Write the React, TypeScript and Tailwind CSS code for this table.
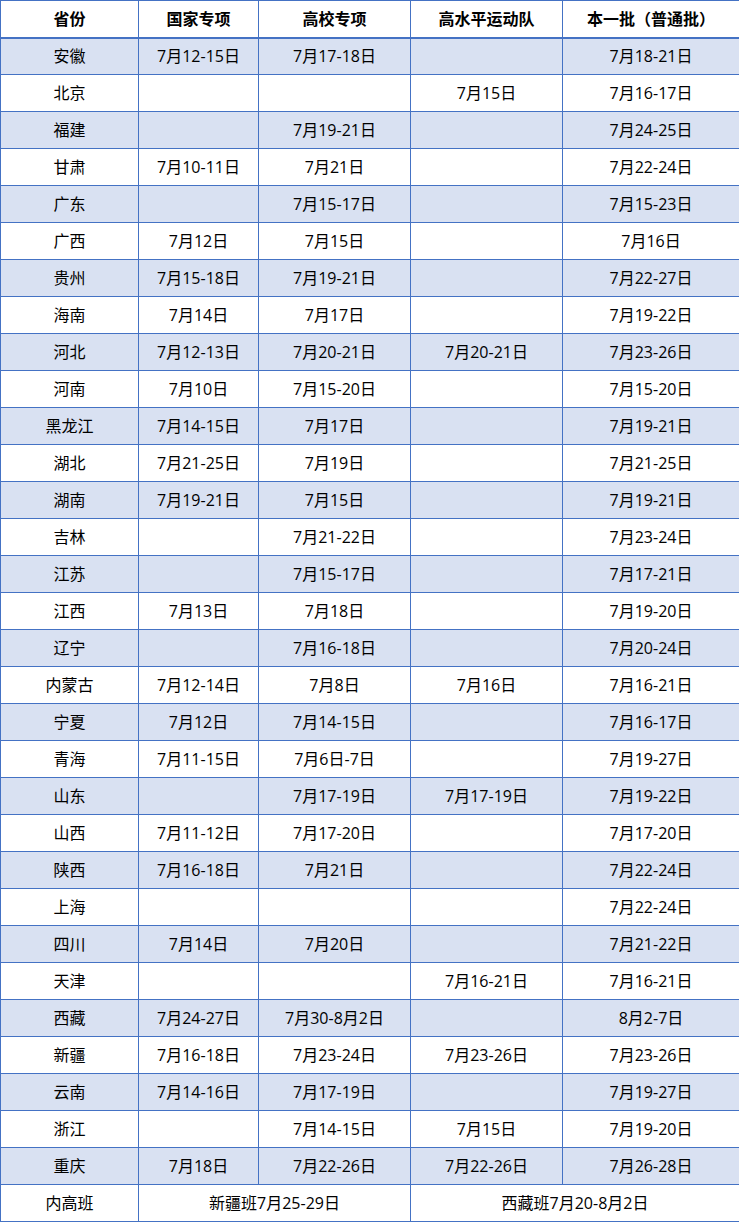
const ROWS: [string, string, string, string, string][] = [
  ["安徽", "7月12-15日", "7月17-18日", "", "7月18-21日"],
  ["北京", "", "", "7月15日", "7月16-17日"],
  ["福建", "", "7月19-21日", "", "7月24-25日"],
  ["甘肃", "7月10-11日", "7月21日", "", "7月22-24日"],
  ["广东", "", "7月15-17日", "", "7月15-23日"],
  ["广西", "7月12日", "7月15日", "", "7月16日"],
  ["贵州", "7月15-18日", "7月19-21日", "", "7月22-27日"],
  ["海南", "7月14日", "7月17日", "", "7月19-22日"],
  ["河北", "7月12-13日", "7月20-21日", "7月20-21日", "7月23-26日"],
  ["河南", "7月10日", "7月15-20日", "", "7月15-20日"],
  ["黑龙江", "7月14-15日", "7月17日", "", "7月19-21日"],
  ["湖北", "7月21-25日", "7月19日", "", "7月21-25日"],
  ["湖南", "7月19-21日", "7月15日", "", "7月19-21日"],
  ["吉林", "", "7月21-22日", "", "7月23-24日"],
  ["江苏", "", "7月15-17日", "", "7月17-21日"],
  ["江西", "7月13日", "7月18日", "", "7月19-20日"],
  ["辽宁", "", "7月16-18日", "", "7月20-24日"],
  ["内蒙古", "7月12-14日", "7月8日", "7月16日", "7月16-21日"],
  ["宁夏", "7月12日", "7月14-15日", "", "7月16-17日"],
  ["青海", "7月11-15日", "7月6日-7日", "", "7月19-27日"],
  ["山东", "", "7月17-19日", "7月17-19日", "7月19-22日"],
  ["山西", "7月11-12日", "7月17-20日", "", "7月17-20日"],
  ["陕西", "7月16-18日", "7月21日", "", "7月22-24日"],
  ["上海", "", "", "", "7月22-24日"],
  ["四川", "7月14日", "7月20日", "", "7月21-22日"],
  ["天津", "", "", "7月16-21日", "7月16-21日"],
  ["西藏", "7月24-27日", "7月30-8月2日", "", "8月2-7日"],
  ["新疆", "7月16-18日", "7月23-24日", "7月23-26日", "7月23-26日"],
  ["云南", "7月14-16日", "7月17-19日", "", "7月19-27日"],
  ["浙江", "", "7月14-15日", "7月15日", "7月19-20日"],
  ["重庆", "7月18日", "7月22-26日", "7月22-26日", "7月26-28日"],
];

const HEADERS = ["省份", "国家专项", "高校专项", "高水平运动队", "本一批（普通批）"];

const cell = "border border-[#4472c4] p-0 text-center align-middle";

export default function App() {
  return (
    <div
      className="w-[739px] bg-white text-[16px] leading-[22px] text-black"
      style={{ fontFamily: '"Open Sans", "Noto Sans CJK SC", sans-serif' }}
    >
      <table className="w-[739px] table-fixed border-collapse">
        <colgroup>
          <col className="w-[138px]" />
          <col className="w-[120px]" />
          <col className="w-[152px]" />
          <col className="w-[152px]" />
          <col className="w-[177px]" />
        </colgroup>
        <thead>
          <tr className="h-[37px]">
            {HEADERS.map((h) => (
              <th key={h} className={`${cell} border-b-2 font-bold`}>
                {h}
              </th>
            ))}
          </tr>
        </thead>
        <tbody>
          {ROWS.map((row, i) => (
            <tr key={row[0]} className={`h-[37px] ${i % 2 === 0 ? "bg-[#d9e1f2]" : "bg-white"}`}>
              {row.map((v, j) => (
                <td key={j} className={cell}>
                  {v}
                </td>
              ))}
            </tr>
          ))}
          <tr className="h-[37px] bg-white">
            <td className={cell}>内高班</td>
            <td className={cell} colSpan={2}>
              新疆班7月25-29日
            </td>
            <td className={cell} colSpan={2}>
              西藏班7月20-8月2日
            </td>
          </tr>
        </tbody>
      </table>
    </div>
  );
}
